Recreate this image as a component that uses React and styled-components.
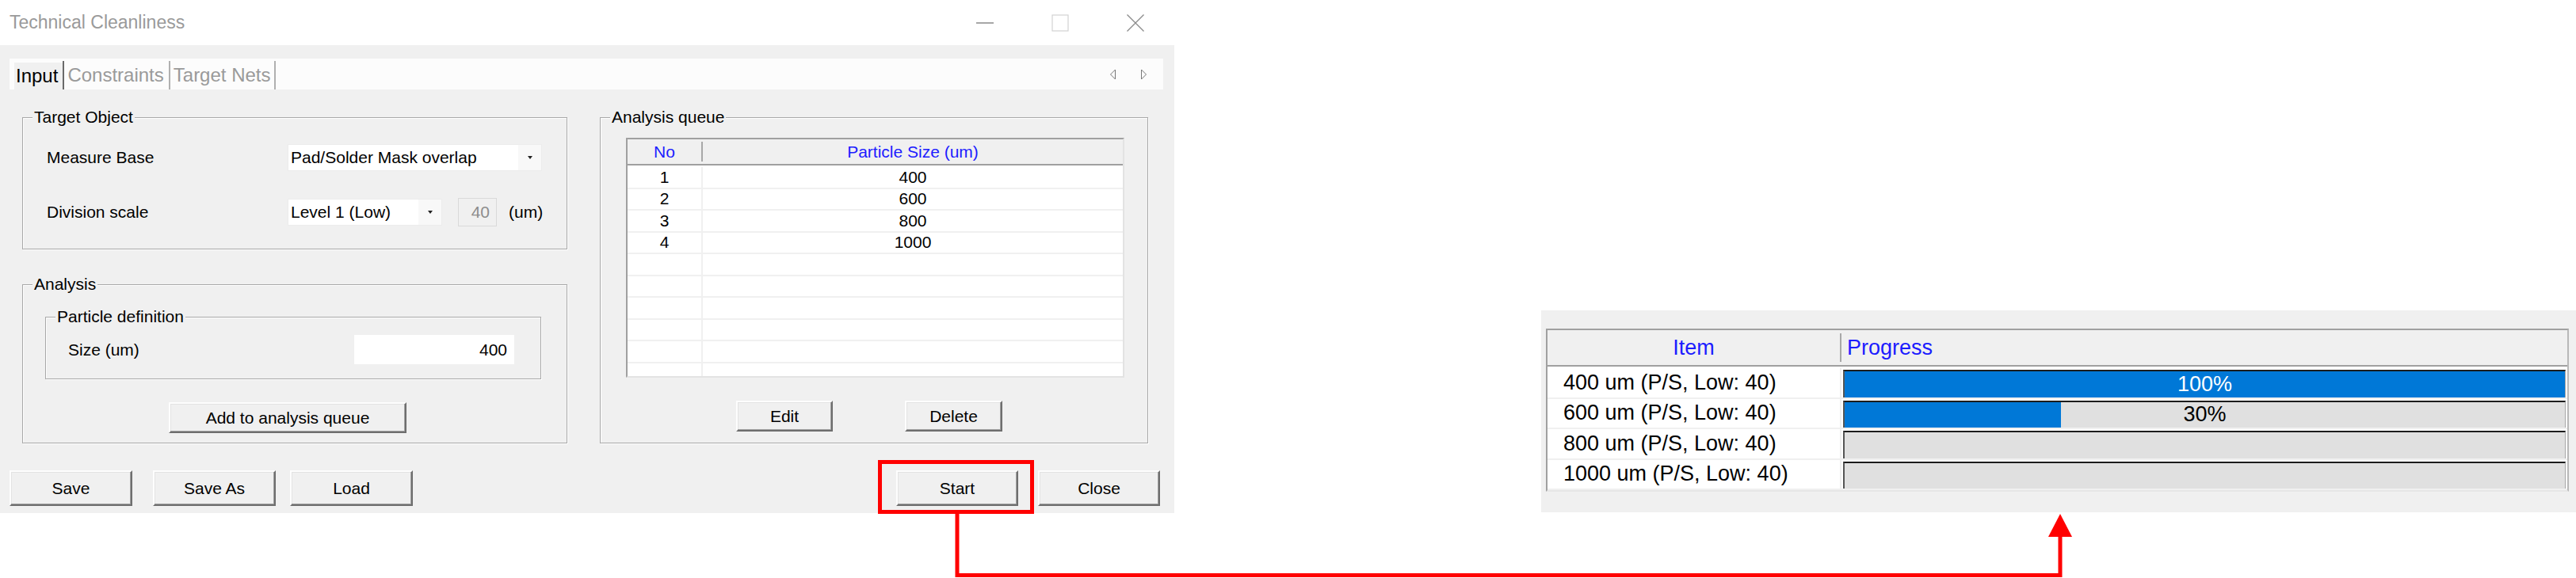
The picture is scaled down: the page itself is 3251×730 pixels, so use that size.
import React from 'react'
import styled, { createGlobalStyle } from 'styled-components'

const GlobalStyle = createGlobalStyle`
  html, body {
    margin: 0;
    padding: 0;
    background: #fff;
  }
  body {
    font-family: "Liberation Sans", Arial, sans-serif;
    color: #000;
  }
  * {
    box-sizing: border-box;
  }
`

const Stage = styled.div`
  position: relative;
  width: 3251px;
  height: 730px;
  display: flex;
  align-items: flex-start;
  overflow: hidden;
`

// ---- dialog window ----

const Window = styled.div`
  width: 1482px;
  height: 648px;
  background: #f0f0f0;
  display: flex;
  flex-direction: column;
  flex-shrink: 0;
`

const TitleBar = styled.div`
  height: 57px;
  background: #fff;
  display: flex;
  align-items: center;
  padding-left: 12px;
`

const Title = styled.div`
  flex: 1;
  font-size: 23px;
  color: #9a9a9a;
`

const CaptionButton = styled.div`
  width: 95px;
  height: 57px;
  display: flex;
  align-items: center;
  justify-content: center;
  &:last-child {
    margin-right: 2px;
  }
`

const TabStrip = styled.div`
  height: 39px;
  margin: 17px 14px 0 12px;
  padding-left: 6px;
  background: #fcfcfc;
  display: flex;
  align-items: flex-end;
`

const Tab = styled.div`
  height: ${p => (p.$active ? '34px' : '36px')};
  display: flex;
  align-items: center;
  padding: 0 ${p => p.$padRight}px 0 2px;
  font-size: 24px;
  color: ${p => (p.$active ? '#000' : '#9a9a9a')};
  background: ${p => (p.$active ? '#f0f0f0' : 'transparent')};
`

const TabSeparator = styled.div`
  width: 2px;
  height: 36px;
  margin-right: 2px;
  background: ${p => (p.$dark ? '#6a6a6a' : '#b0b0b0')};
`

const TabScroll = styled.div`
  margin-left: auto;
  margin-right: 20px;
  height: 39px;
  display: flex;
  align-items: center;
  gap: 30px;
`

const Content = styled.div`
  display: flex;
  gap: 41px;
  margin-top: 35px;
  padding-left: 28px;
`

const Column = styled.div`
  display: flex;
  flex-direction: column;
  gap: 44px;
`

const GroupBox = styled.div`
  position: relative;
  width: ${p => p.$w}px;
  height: ${p => p.$h}px;
  border: 1px solid #a8a8a8;
  box-shadow: inset 1px 1px 0 #fff, 1px 1px 0 #fff;
  font-size: 21px;
`

const Legend = styled.span`
  position: absolute;
  top: -13px;
  left: 12px;
  padding: 0 2px;
  background: #f0f0f0;
  line-height: 24px;
  font-size: 21px;
`

const FormRows = styled.div`
  display: flex;
  flex-direction: column;
  gap: 35px;
  padding: 33px 0 0 30px;
`

const FormRow = styled.div`
  display: flex;
  align-items: center;
  height: 34px;
`

const FieldLabel = styled.div`
  width: ${p => p.$w}px;
  flex-shrink: 0;
`

const Combo = styled.div`
  width: ${p => p.$w}px;
  height: 34px;
  background: #fff;
  border: 1px solid #ececec;
  display: flex;
  align-items: center;
`

const ComboText = styled.div`
  flex: 1;
  padding-left: 3px;
  white-space: nowrap;
`

const ComboArrow = styled.div`
  width: 29px;
  height: 100%;
  background: #f8f8f8;
  display: flex;
  align-items: center;
  justify-content: center;
  &::after {
    content: '';
    border-left: 3px solid transparent;
    border-right: 3px solid transparent;
    border-top: 4px solid #222;
  }
`

const EditBox = styled.div`
  width: ${p => p.$w}px;
  height: ${p => p.$h}px;
  margin-left: ${p => p.$ml || 0}px;
  background: ${p => (p.$disabled ? '#f0f0f0' : '#fff')};
  border: 1px solid ${p => (p.$disabled ? '#d9d9d9' : '#fff')};
  color: ${p => (p.$disabled ? '#8c8c8c' : '#000')};
  display: flex;
  align-items: center;
  justify-content: flex-end;
  padding-right: 8px;
`

const Unit = styled.div`
  margin-left: 15px;
`

const InnerGroupWrap = styled.div`
  padding: 40px 0 0 28px;
`

const SizeRow = styled.div`
  display: flex;
  align-items: center;
  padding: 22px 0 0 28px;
`

const ButtonRow = styled.div`
  display: flex;
  gap: ${p => p.$gap || 0}px;
  padding-left: ${p => p.$pl || 0}px;
  margin-top: ${p => p.$mt || 0}px;
`

const Button = styled.div`
  width: ${p => p.$w}px;
  height: ${p => p.$h || 45}px;
  display: flex;
  align-items: center;
  justify-content: center;
  font-size: 21px;
  background: #f0f0f0;
  border: 2px solid;
  border-color: #fdfdfd #6e6e6e #6e6e6e #fdfdfd;
  box-shadow: inset -1px -1px 0 #a0a0a0, inset 1px 1px 0 #e3e3e3;
`

const QueueWrap = styled.div`
  padding: 25px 0 0 32px;
`

const ListView = styled.div`
  width: 629px;
  height: 303px;
  background: #fff;
  border: 2px solid;
  border-color: #a0a0a0 #e3e3e3 #e3e3e3 #a0a0a0;
  overflow: hidden;
`

const ListHeader = styled.div`
  display: grid;
  grid-template-columns: ${p => p.$cols};
  height: ${p => p.$h}px;
  padding: ${p => p.$pad}px 0;
  background: #f0f0f0;
  border-bottom: 2px solid #a0a0a0;
  color: #1c1cff;
`

const HeaderCell = styled.div`
  display: flex;
  align-items: center;
  justify-content: ${p => (p.$left ? 'flex-start' : 'center')};
  padding-left: ${p => (p.$left ? 7 : 0)}px;
  & + & {
    border-left: 2px solid #a8a8a8;
  }
`

const ListBody = styled.div`
  padding-top: 2px;
`

const ListRow = styled.div`
  display: grid;
  grid-template-columns: ${p => p.$cols};
  height: ${p => p.$h}px;
  border-bottom: 2px solid #f0f0f0;
`

const Cell = styled.div`
  display: flex;
  align-items: center;
  justify-content: ${p => (p.$left ? 'flex-start' : 'center')};
  padding-left: ${p => (p.$left ? 20 : 0)}px;
  white-space: nowrap;
  & + & {
    border-left: 2px solid #f0f0f0;
  }
`

const BottomBar = styled.div`
  display: flex;
  margin-top: 34px;
  padding-left: 12px;
`

// ---- progress panel ----

const ProgressPanel = styled.div`
  width: 1306px;
  height: 255px;
  margin: 392px 0 0 463px;
  padding: 23px 0 0 6px;
  background: #f0f0f0;
  flex-shrink: 0;
  font-size: 27px;
`

const ProgressTable = styled.div`
  width: 1291px;
  height: 206px;
  background: #fff;
  border: 2px solid;
  border-color: #a0a0a0 #b8b8b8 #e6e6e6 #a0a0a0;
  overflow: hidden;
`

const BarCell = styled.div`
  padding: 2px 2px 0 2px;
  border-left: 2px solid #f0f0f0;
`

const Bar = styled.div`
  position: relative;
  height: 100%;
  background: #e0e0e0;
  border-top: 2px solid #1c1c1c;
  border-left: 2px solid #555;
  border-right: 1px solid #a8a8a8;
  display: flex;
  align-items: center;
  justify-content: center;
  overflow: hidden;
`

const BarFill = styled.div`
  position: absolute;
  left: 0;
  top: 0;
  bottom: 0;
  background: #0078d7;
`

const BarLabel = styled.span`
  position: relative;
  color: ${p => (p.$light ? '#fff' : '#000')};
`

const Overlay = styled.svg`
  position: absolute;
  left: 0;
  top: 0;
  pointer-events: none;
`

const queue = [400, 600, 800, 1000]

const progress = [
  { label: '400 um (P/S, Low: 40)', pct: 100 },
  { label: '600 um (P/S, Low: 40)', pct: 30 },
  { label: '800 um (P/S, Low: 40)', pct: null },
  { label: '1000 um (P/S, Low: 40)', pct: null },
]

function CaptionIcons() {
  return (
    <>
      <CaptionButton>
        <svg width="24" height="4" viewBox="0 0 24 4">
          <line x1="1" y1="2" x2="23" y2="2" stroke="#8a8a8a" strokeWidth="1.5" />
        </svg>
      </CaptionButton>
      <CaptionButton>
        <svg width="22" height="22" viewBox="0 0 22 22">
          <rect x="1" y="1" width="20" height="20" fill="none" stroke="#d2d2d2" strokeWidth="1.2" />
        </svg>
      </CaptionButton>
      <CaptionButton>
        <svg width="24" height="24" viewBox="0 0 24 24">
          <path d="M1.5 1.5 L22.5 22.5 M22.5 1.5 L1.5 22.5" stroke="#8a8a8a" strokeWidth="1.3" />
        </svg>
      </CaptionButton>
    </>
  )
}

export default function App() {
  return (
    <Stage>
      <GlobalStyle />

      <Window>
        <TitleBar>
          <Title>Technical Cleanliness</Title>
          <CaptionIcons />
        </TitleBar>

        <TabStrip>
          <Tab $active $padRight={6}>Input</Tab>
          <TabSeparator $dark />
          <Tab $padRight={6}>Constraints</Tab>
          <TabSeparator />
          <Tab $padRight={4}>Target Nets</Tab>
          <TabSeparator />
          <TabScroll>
            <svg width="9" height="14" viewBox="0 0 9 14">
              <path d="M7.5 1 L1.5 7 L7.5 13 Z" fill="none" stroke="#777" strokeWidth="1" />
            </svg>
            <svg width="9" height="14" viewBox="0 0 9 14">
              <path d="M1.5 1 L7.5 7 L1.5 13 Z" fill="none" stroke="#777" strokeWidth="1" />
            </svg>
          </TabScroll>
        </TabStrip>

        <Content>
          <Column>
            <GroupBox $w={688} $h={167}>
              <Legend>Target Object</Legend>
              <FormRows>
                <FormRow>
                  <FieldLabel $w={304}>Measure Base</FieldLabel>
                  <Combo $w={321}>
                    <ComboText>Pad/Solder Mask overlap</ComboText>
                    <ComboArrow />
                  </Combo>
                </FormRow>
                <FormRow>
                  <FieldLabel $w={304}>Division scale</FieldLabel>
                  <Combo $w={195}>
                    <ComboText>Level 1 (Low)</ComboText>
                    <ComboArrow />
                  </Combo>
                  <EditBox $disabled $w={49} $h={36} $ml={20}>40</EditBox>
                  <Unit>(um)</Unit>
                </FormRow>
              </FormRows>
            </GroupBox>

            <GroupBox $w={688} $h={201}>
              <Legend>Analysis</Legend>
              <InnerGroupWrap>
                <GroupBox $w={626} $h={79}>
                  <Legend>Particle definition</Legend>
                  <SizeRow>
                    <FieldLabel $w={361}>Size (um)</FieldLabel>
                    <EditBox $w={202} $h={37}>400</EditBox>
                  </SizeRow>
                </GroupBox>
              </InnerGroupWrap>
              <ButtonRow $pl={184} $mt={29}>
                <Button $w={300} $h={39}>Add to analysis queue</Button>
              </ButtonRow>
            </GroupBox>
          </Column>

          <GroupBox $w={692} $h={412}>
            <Legend>Analysis queue</Legend>
            <QueueWrap>
              <ListView>
                <ListHeader $cols="93px 1fr" $h={33} $pad={3}>
                  <HeaderCell>No</HeaderCell>
                  <HeaderCell>Particle Size (um)</HeaderCell>
                </ListHeader>
                <ListBody>
                  {Array.from({ length: 10 }).map((_, i) => (
                    <ListRow key={i} $cols="93px 1fr" $h={27.5}>
                      <Cell>{queue[i] ? i + 1 : ''}</Cell>
                      <Cell>{queue[i] || ''}</Cell>
                    </ListRow>
                  ))}
                </ListBody>
              </ListView>
            </QueueWrap>
            <ButtonRow $pl={171} $gap={91} $mt={29}>
              <Button $w={122} $h={39}>Edit</Button>
              <Button $w={123} $h={39}>Delete</Button>
            </ButtonRow>
          </GroupBox>
        </Content>

        <BottomBar>
          <ButtonRow $gap={26}>
            <Button $w={155}>Save</Button>
            <Button $w={155}>Save As</Button>
          </ButtonRow>
          <ButtonRow $pl={18}>
            <Button $w={155}>Load</Button>
          </ButtonRow>
          <ButtonRow $pl={610} $gap={25}>
            <Button $w={154}>Start</Button>
            <Button $w={154}>Close</Button>
          </ButtonRow>
        </BottomBar>
      </Window>

      <ProgressPanel>
        <ProgressTable>
          <ListHeader $cols="369px 1fr" $h={46} $pad={4}>
            <HeaderCell>Item</HeaderCell>
            <HeaderCell $left>Progress</HeaderCell>
          </ListHeader>
          <ListBody>
            {progress.map(row => (
              <ListRow key={row.label} $cols="369px 1fr" $h={38.5}>
                <Cell $left>{row.label}</Cell>
                <BarCell>
                  <Bar>
                    {row.pct !== null && <BarFill style={{ width: `${row.pct}%` }} />}
                    {row.pct !== null && <BarLabel $light={row.pct >= 50}>{row.pct}%</BarLabel>}
                  </Bar>
                </BarCell>
              </ListRow>
            ))}
          </ListBody>
        </ProgressTable>
      </ProgressPanel>

      <Overlay width="3251" height="730" viewBox="0 0 3251 730">
        <rect x="1110.5" y="583.5" width="192" height="63" fill="none" stroke="#ff0000" strokeWidth="5" />
        <polyline points="1208,649 1208,726.5 2600,726.5 2600,676" fill="none" stroke="#ff0000" strokeWidth="5" />
        <polygon points="2600,649 2585,678 2615,678" fill="#ff0000" />
      </Overlay>
    </Stage>
  )
}
